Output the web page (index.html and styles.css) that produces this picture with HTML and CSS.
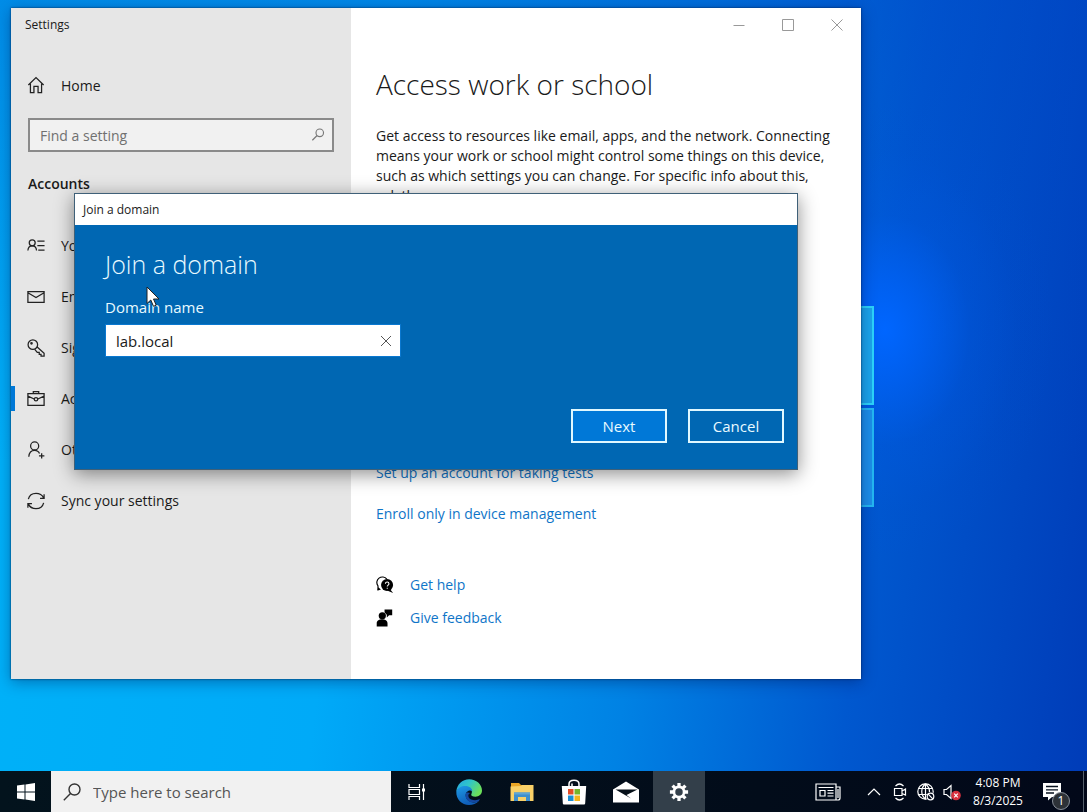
FILE: index.html
```html
<!DOCTYPE html>
<html lang="en">
<head>
<meta charset="utf-8">
<meta name="viewport" content="width=device-width, initial-scale=1">
<title>Settings</title>
<link rel="stylesheet" href="styles.css">
</head>
<body>
<div class="screen">
  <div class="desktop">
    <div class="wall-logo"><span class="pane"></span><span class="pane lower"></span></div>

    <section class="window" aria-label="Settings">
      <aside class="sidebar">
        <div class="caption">Settings</div>
        <a class="nav-item home" href="#">
          <svg class="icon" viewBox="0 0 20 20"><path d="M1.500 10 10 1.700l8.500 8.300M3.800 8.500v10h3.900v-7h4.600v7h3.900v-10"/></svg>
          <span>Home</span>
        </a>
        <div class="search">
          <input type="text" placeholder="Find a setting" aria-label="Find a setting">
          <svg class="search-icon" viewBox="0 0 16 16"><circle cx="10" cy="5.500" r="4.300"/><path d="M7 8.600 1.500 14"/></svg>
        </div>
        <h2 class="group">Accounts</h2>
        <nav class="nav">
          <a class="nav-item" href="#">
            <svg class="icon" viewBox="0 0 20 20"><circle cx="5.800" cy="6.500" r="3.300"/><path d="M1 15c.2-3.300 1.900-5.200 4.800-5.200s4.600 1.900 4.800 5.200M11.500 4.500H19.500M11.500 9.500H19.500M12.500 14.500H19.500"/></svg>
            <span>Your info</span>
          </a>
          <a class="nav-item" href="#">
            <svg class="icon" viewBox="0 0 20 20"><path d="M1 4h18v12H1zM1 5.200l9 5.300 9-5.300"/></svg>
            <span>Email &amp; accounts</span>
          </a>
          <a class="nav-item" href="#">
            <svg class="icon" viewBox="0 0 20 20"><circle cx="6.500" cy="6.300" r="5.300"/><circle cx="5" cy="4.800" r=".8"/><path d="M11 8.600l8 7.200v3.200h-3.400v-2h-2v-2.200h-2.200L8.600 11.500"/></svg>
            <span>Sign-in options</span>
          </a>
          <a class="nav-item selected" href="#">
            <svg class="icon" viewBox="0 0 20 20"><path d="M1 4h18v13H1zM7 4V1.800h6V4M1 6.800l7 3.200M19 6.800l-7 3.200"/><circle cx="10" cy="10.300" r="1.900"/></svg>
            <span>Access work or school</span>
          </a>
          <a class="nav-item" href="#">
            <svg class="icon" viewBox="0 0 20 20"><circle cx="8.500" cy="5.500" r="4.500"/><path d="M2 17.500c.3-4.500 2.500-7.200 6.500-7.200 2.700 0 4.500 1.300 5.400 3.500M16.300 13.500v6M13.300 16.500h6"/></svg>
            <span>Other users</span>
          </a>
          <a class="nav-item" href="#">
            <svg class="icon" viewBox="0 0 20 20"><path d="M1.500 8C2.500 4 6 1.500 10 1.500c3.900 0 7 2 8.500 5M19 2.500v4.500h-4.500M18.500 12c-1 4-4.500 6.500-8.500 6.500-3.900 0-7-2-8.500-5M1 17.500V13h4.500"/></svg>
            <span>Sync your settings</span>
          </a>
        </nav>
      </aside>

      <main class="content">
        <div class="window-buttons">
          <button type="button" aria-label="Minimize"><svg viewBox="0 0 12 12"><path d="M.5 6.500h11"/></svg></button>
          <button type="button" aria-label="Maximize"><svg viewBox="0 0 12 12"><path d="M.5.5h11v11H.5z"/></svg></button>
          <button type="button" aria-label="Close"><svg viewBox="0 0 12 12"><path d="M.5.5l11 11M11.500.5l-11 11"/></svg></button>
        </div>
        <div class="intro">
          <h1>Access work or school</h1>
          <p>Get access to resources like email, apps, and the network. Connecting means your work or school might control some things on this device, such as which settings you can change. For specific info about this, ask them.</p>
        </div>
        <div class="links">
          <a class="related" href="#">Set up an account for taking tests</a>
          <a class="related" href="#">Enroll only in device management</a>
          <div class="support">
            <a href="#">
              <svg class="support-icon" viewBox="0 0 20 20"><path d="M2.200 15.500V11A6 6 0 1 1 12 3.500" fill="none" stroke="#000" stroke-width="1.300"/><path d="M1.500 16.500l1-4 3 2.500z"/><circle cx="12.300" cy="10" r="6.700"/><path d="M15 14l4 5-6-2.500z"/><path d="M10.500 8.500c0-2.600 3.900-2.400 3.900 0 0 1.500-1.900 1.600-1.900 3.200M12.500 13v1.300" fill="none" stroke="#fff" stroke-width="1.200"/></svg>
              <span>Get help</span>
            </a>
            <a href="#">
              <svg class="support-icon" viewBox="0 0 20 20"><circle cx="7" cy="7.500" r="4"/><path d="M.8 19.500v-3.500c0-6 12-6 12 0v3.500zM9.500.5h8.500v6.500h-3.500L12 9.500V6.500L9.500 4z"/></svg>
              <span>Give feedback</span>
            </a>
          </div>
        </div>
      </main>
    </section>

    <form class="dialog" role="dialog" aria-labelledby="dialog-title">
      <div class="dialog-caption">Join a domain</div>
      <div class="dialog-body">
        <h2 id="dialog-title">Join a domain</h2>
        <label for="domain">Domain name</label>
        <div class="field">
          <input id="domain" type="text" value="lab.local">
          <button type="button" aria-label="Clear"><svg viewBox="0 0 12 12"><path d="M1 1l10 10M11 1L1 11"/></svg></button>
        </div>
        <div class="actions">
          <button class="primary" type="button">Next</button>
          <button type="button">Cancel</button>
        </div>
      </div>
    </form>

    <svg class="pointer" viewBox="0 0 14 22"><path d="M1 1v16.500l3.800-3.500 2.700 6.300 2.700-1.100-2.700-6.200H13z"/></svg>
  </div>

  <footer class="taskbar">
    <button class="start" type="button" aria-label="Start">
      <svg viewBox="0 0 18 18"><path d="M0 2.600 7.500 1.500v7H0zM8.500 1.400 18 0v8.500H8.500zM0 9.500h7.500v7L0 15.400zM8.500 9.500H18V18l-9.500-1.400z"/></svg>
    </button>
    <label class="task-search">
      <svg viewBox="0 0 18 18"><circle cx="11.500" cy="6.500" r="5.500"/><path d="M7.500 10.500.8 17.200"/></svg>
      <input type="text" placeholder="Type here to search" aria-label="Type here to search">
    </label>
    <div class="apps">
      <button type="button" aria-label="Task view">
        <svg class="line-icon" width="18" height="18" viewBox="0 0 18 18"><path d="M1 1v3.500h10.500V1M1 17v-3.500h10.500V17M1 4.500h10.500M1 6.500h10.500v5H1zM15.500 1v16"/><path d="M14 5.500h3v3h-3z" fill="#fff" stroke="none"/></svg>
      </button>
      <button type="button" aria-label="Edge">
        <svg width="26" height="26" viewBox="0 0 26 26">
          <defs>
            <linearGradient id="e1" x1="0" y1="0" x2="1" y2=".5"><stop offset="0" stop-color="#25a5e6"/><stop offset=".5" stop-color="#30c6c8"/><stop offset="1" stop-color="#6be05a"/></linearGradient>
            <linearGradient id="e2" x1="0" y1="0" x2=".4" y2="1"><stop offset="0" stop-color="#1e9be6"/><stop offset="1" stop-color="#0f5db8"/></linearGradient>
          </defs>
          <path d="M.3 12.500C.8 5.500 6.300.2 13.200.2 20.300.2 26 5.300 26 11.500c0 4-3.200 6.200-6.500 6.200-3 0-4.800-1.200-4.200-2.400 1.800-3-.3-7-5.300-7-4.800 0-8.500 2-9.700 4.200z" fill="url(#e1)"/>
          <path d="M.3 12.500C1.500 9 5.200 7 9.300 7c4.200 0 7 2.500 7 5.300-2-1.700-6.600-.4-6.600 4 0 4.200 4 7.200 8.300 7.200 1.800 0 3.300-.5 4.700-1.200C20.400 24.700 17 26 13 26 5.800 26 0 20.500.3 12.500z" fill="url(#e2)"/>
          <path d="M9.800 14.500c-1.500 5.600 3.200 9 8.200 9 1.900 0 3.300-.5 4.700-1.200l1.300-2.200c-3.800 2-9.600 1.300-11.200-1.600-1-1.700-.3-3.700 1.500-4.400-2-1-3.900-.8-4.500.4z" fill="#1448a0"/>
        </svg>
      </button>
      <button type="button" aria-label="File Explorer">
        <svg width="24" height="22" viewBox="0 0 24 22"><path d="M1 2h8l2 2h12v5H1z" fill="#e9a526"/><path d="M.5 5.500 11 5l1-1h11.500V20H.5z" fill="#f8d068"/><path d="M4 20v-8.500h16V20h-4v-4H8v4z" fill="#3f8fcc"/><path d="M4 11.500h16v2H4z" fill="#5fa5d5"/></svg>
      </button>
      <button type="button" aria-label="Store">
        <svg width="26" height="26" viewBox="0 0 26 26"><path d="M8 8V5c0-5 10-5 10 0v3M11 8V4.500" fill="none" stroke="#fff" stroke-width="1.500"/><path d="M.8 7h24.400l-1 17c0 1-.6 1.500-1.500 1.500H3.300c-.9 0-1.500-.5-1.500-1.500z" fill="#fff"/><path d="M7 10h5.500v5.500H7z" fill="#e34c26"/><path d="M13.500 10H19v5.500h-5.500z" fill="#74b52b"/><path d="M7 16.500h5.500V22H7z" fill="#198fd4"/><path d="M13.500 16.500H19V22h-5.500z" fill="#f3b51c"/></svg>
      </button>
      <button type="button" aria-label="Mail">
        <svg width="26" height="22" viewBox="0 0 26 22"><path d="M0 8.500 13 .5l13 8V21.500H0z" fill="#fff"/><path d="M2.500 8.500h22L13.500 14l4.500 3.500L2.500 8.500z" fill="#050f18"/></svg>
      </button>
      <button class="active" type="button" aria-label="Settings">
        <svg width="20" height="20" viewBox="0 0 22 22"><path d="M11 1v4M11 17v4M1 11h4M17 11h4M3.900 3.900l2.900 2.900M15.200 15.200l2.900 2.900M3.900 18.100l2.900-2.900M15.200 6.800l2.900-2.900" stroke="#fff" stroke-width="3.600"/><circle cx="11" cy="11" r="5.600" fill="none" stroke="#fff" stroke-width="3"/></svg>
      </button>
    </div>
    <div class="tray">
      <button class="news" type="button" aria-label="News">
        <svg class="line-icon" width="26" height="18" viewBox="0 0 26 18"><path d="M1 1h20v16H1zM21 4h4v11c0 1.300-1 2-2 2h-2M3.500 4.500h15M5 7.500h5v5.500H5zM12.500 7.500h6M12.500 10.200h6M12.500 13h6M23 6v9"/></svg>
      </button>
      <button type="button" aria-label="Show hidden icons">
        <svg class="line-icon" width="14" height="8" viewBox="0 0 14 8"><path d="M1 7l6-6 6 6"/></svg>
      </button>
      <button type="button" aria-label="Meet Now">
        <svg class="line-icon" width="14" height="18" viewBox="0 0 14 18"><path d="M1.500 5.500h7.500v7H1.500zM9 8l3.500-2v6L9 10.500M2.500 3c2.500-2.500 5.500-2.500 8 0M2.500 15c2.500 2.500 5.500 2.500 8 0"/></svg>
      </button>
      <button type="button" aria-label="Network">
        <svg class="line-icon" width="18" height="18" viewBox="0 0 18 18"><circle cx="8.500" cy="8.500" r="7.700"/><path d="M1.500 5.500h14M1 11.500h9M8.500.8c-5 4.600-5 10.800 0 15.400M8.500.8c3 2.700 4.200 5.500 4 8.500M8.500.8v15.400"/><circle cx="13.500" cy="13.500" r="4.400" fill="#020a1c" stroke="none"/><circle cx="13.500" cy="13.500" r="3.300"/><path d="M11.200 11.200l4.600 4.600"/></svg>
      </button>
      <button type="button" aria-label="Volume">
        <svg class="line-icon" width="18" height="18" viewBox="0 0 18 18"><path d="M1 6.500h2.500L8 2.500v13L3.500 11.500H1z"/><circle cx="13" cy="12.500" r="4.800" fill="#d5303e" stroke="none"/><path d="M11.200 10.700l3.600 3.600M14.800 10.700l-3.600 3.600"/></svg>
      </button>
      <div class="clock"><span>4:08 PM</span><span>8/3/2025</span></div>
      <button class="notes" type="button" aria-label="Notifications">
        <svg width="18" height="18" viewBox="0 0 18 18"><path d="M0 0h18v14H9l-4 3.500V14H0z" fill="#fff"/><path d="M3 3.500h12M3 6.800h12M3 10h8" stroke="#06101e" stroke-width="1.300"/></svg>
        <span class="badge">1</span>
      </button>
    </div>
  </footer>
</div>
</body>
</html>
```
FILE: styles.css
```css
* {
  box-sizing: border-box;
}

body {
  margin: 0;
  font-family: "Open Sans", "Noto Sans", sans-serif;
  font-size: 14px;
  color: #1a1a1a;
}

h1,
h2,
p {
  margin: 0;
}

a {
  color: inherit;
  text-decoration: none;
}

button,
input {
  margin: 0;
  padding: 0;
  border: 0;
  background: none;
  font: inherit;
  color: inherit;
}

input {
  min-width: 0;
  outline: none;
}

.screen {
  display: flex;
  flex-direction: column;
  height: 100vh;
  overflow: hidden;
}

.desktop {
  position: relative;
  flex: 1;
  overflow: hidden;
  background:
    radial-gradient(ellipse 170px 230px at 885px 330px, #0066ff 0%, rgba(0, 98, 248, 0.75) 22%, rgba(0, 88, 230, 0.3) 50%, rgba(0, 80, 220, 0.08) 78%, rgba(0, 80, 220, 0) 100%),
    linear-gradient(to bottom, rgba(0, 70, 200, 0.35) 0%, rgba(0, 110, 220, 0) 60%),
    linear-gradient(97deg, #00b2f8 0%, #00aaf8 34%, #0082e4 60%, #0058cf 79%, #003cb8 100%);
}

/* Wallpaper light panes */
.wall-logo {
  position: absolute;
  top: 306px;
  left: 760px;
  width: 114px;
  display: grid;
  gap: 3px;
}

.pane {
  height: 99px;
  border: 2px solid #2cd4fa;
  background: #1ba4ea;
}

.pane.lower {
  border-color: #24b8f2;
  background: #1c8ee8;
}

/* Settings window */
.window {
  position: absolute;
  inset: 8px 226px 92px 11px;
  display: grid;
  grid-template-columns: 2fr 3fr;
  background: #fff;
  box-shadow: 0 0 2px rgba(0, 20, 60, 0.8), 0 3px 14px rgba(0, 20, 80, 0.4);
}

.sidebar {
  background: #e6e6e6;
}

.caption {
  padding-left: 14px;
  font-size: 12px;
  line-height: 34px;
}

.nav-item {
  position: relative;
  display: flex;
  align-items: center;
  gap: 16px;
  height: 51px;
  padding-left: 16px;
}

.nav-item.home {
  height: 34px;
  margin-top: 26px;
}

.nav-item.selected::before {
  content: "";
  position: absolute;
  left: 0;
  width: 4px;
  height: 25px;
  background: #0078d7;
}

.icon {
  width: 18px;
  height: 18px;
  fill: none;
  stroke: #222;
  stroke-width: 1.4;
}

.search {
  display: flex;
  align-items: center;
  height: 34px;
  margin: 16px 17px 0;
  padding: 0 7px 0 10px;
  border: 2px solid #8a8a8a;
  background: #f1f1f1;
}

.search input {
  flex: 1;
}

.search input::placeholder {
  color: #707070;
  opacity: 1;
}

.search-icon {
  width: 14px;
  height: 14px;
  fill: none;
  stroke: #777;
  stroke-width: 1.3;
}

.group {
  margin: 20px 17px 0;
  font-size: 14px;
  font-weight: 600;
  line-height: 24px;
}

.nav {
  margin-top: 24px;
}

.content {
  display: flex;
  flex-direction: column;
  padding-bottom: 45px;
}

.window-buttons {
  display: flex;
  justify-content: flex-end;
}

.window-buttons button {
  display: grid;
  place-items: center;
  width: 49px;
  height: 34px;
}

.window-buttons svg {
  width: 12px;
  height: 12px;
  fill: none;
  stroke: #999;
}

.intro {
  padding: 22px 28px 0 25px;
}

h1 {
  font-size: 28px;
  font-weight: 300;
  line-height: 40px;
}

.intro p {
  margin-top: 22px;
  line-height: 20px;
}

.links {
  margin-top: auto;
  padding-left: 25px;
  color: #0f75c8;
}

.related {
  display: block;
  line-height: 41px;
}

.support {
  margin-top: 34px;
}

.support a {
  display: flex;
  align-items: center;
  gap: 16px;
  height: 33px;
}

.support-icon {
  width: 18px;
  height: 18px;
  fill: #000;
}

/* Join a domain dialog */
.dialog {
  position: absolute;
  top: 193px;
  left: 74px;
  right: 289px;
  border: 1px solid #3f6078;
  background: #0067b3;
  box-shadow: 0 4px 18px rgba(0, 0, 0, 0.45);
}

.dialog-caption {
  padding-left: 8px;
  background: #fff;
  font-size: 12px;
  line-height: 31px;
}

.dialog-body {
  padding: 22px 13px 26px 30px;
  color: #e8faff;
}

.dialog-body h2 {
  font-size: 25px;
  font-weight: 300;
  line-height: 34px;
}

.dialog-body label {
  display: block;
  margin-top: 15px;
  font-size: 15px;
  line-height: 22px;
}

.field {
  display: flex;
  align-items: center;
  width: 296px;
  height: 33px;
  margin-top: 6px;
  padding-left: 10px;
  border: 1px solid #0a78d0;
  background: #fff;
  color: #1a1a1a;
  font-size: 15px;
}

.field input {
  flex: 1;
}

.field button {
  display: grid;
  place-items: center;
  width: 28px;
  height: 30px;
}

.field svg {
  width: 12px;
  height: 12px;
  stroke: #555;
}

.actions {
  display: flex;
  justify-content: flex-end;
  gap: 21px;
  margin-top: 52px;
}

.actions button {
  width: 96px;
  height: 34px;
  border: 2px solid #e0f8ff;
  font-size: 15px;
}

.actions .primary {
  background: #0078d7;
}

.pointer {
  position: absolute;
  top: 286px;
  left: 146px;
  width: 14px;
  height: 22px;
  fill: #fff;
  stroke: #222;
}

/* Taskbar */
.taskbar {
  display: flex;
  height: 41px;
  background: linear-gradient(to right, #03131d, #020c1a 70%, #020819);
  color: #fff;
}

.taskbar button {
  display: grid;
  place-items: center;
}

.start {
  width: 51px;
}

.start svg {
  width: 18px;
  height: 18px;
  fill: #fff;
}

.task-search {
  display: flex;
  align-items: center;
  gap: 12px;
  width: 340px;
  padding: 0 12px;
  background: #f1f1f1;
  color: #444;
  font-size: 15px;
}

.task-search svg {
  width: 18px;
  height: 18px;
  fill: none;
  stroke: #333;
  stroke-width: 1.4;
}

.task-search input {
  flex: 1;
}

.task-search input::placeholder {
  color: #555;
  opacity: 1;
}

.apps {
  display: grid;
  grid-template-columns: repeat(6, 1fr);
  width: 314px;
}

.apps .active {
  background: #333f4a;
}

.line-icon {
  fill: none;
  stroke: #fff;
  stroke-width: 1.2;
}

.tray {
  display: flex;
  margin-left: auto;
  padding-right: 3px;
}

.tray button {
  width: 26px;
}

.tray .news {
  width: 46px;
  margin-right: 10px;
}

.clock {
  display: grid;
  align-content: center;
  width: 66px;
  text-align: center;
  font-size: 12px;
  line-height: 18px;
}

.tray .notes {
  position: relative;
  width: 53px;
  padding-right: 10px;
  border-right: 1px solid #56606c;
}

.badge {
  position: absolute;
  right: 13px;
  bottom: 2px;
  width: 18px;
  height: 18px;
  border: 1px solid #89909a;
  border-radius: 50%;
  background: #2d3238;
  font-size: 12px;
  line-height: 16px;
  text-align: center;
}
```
